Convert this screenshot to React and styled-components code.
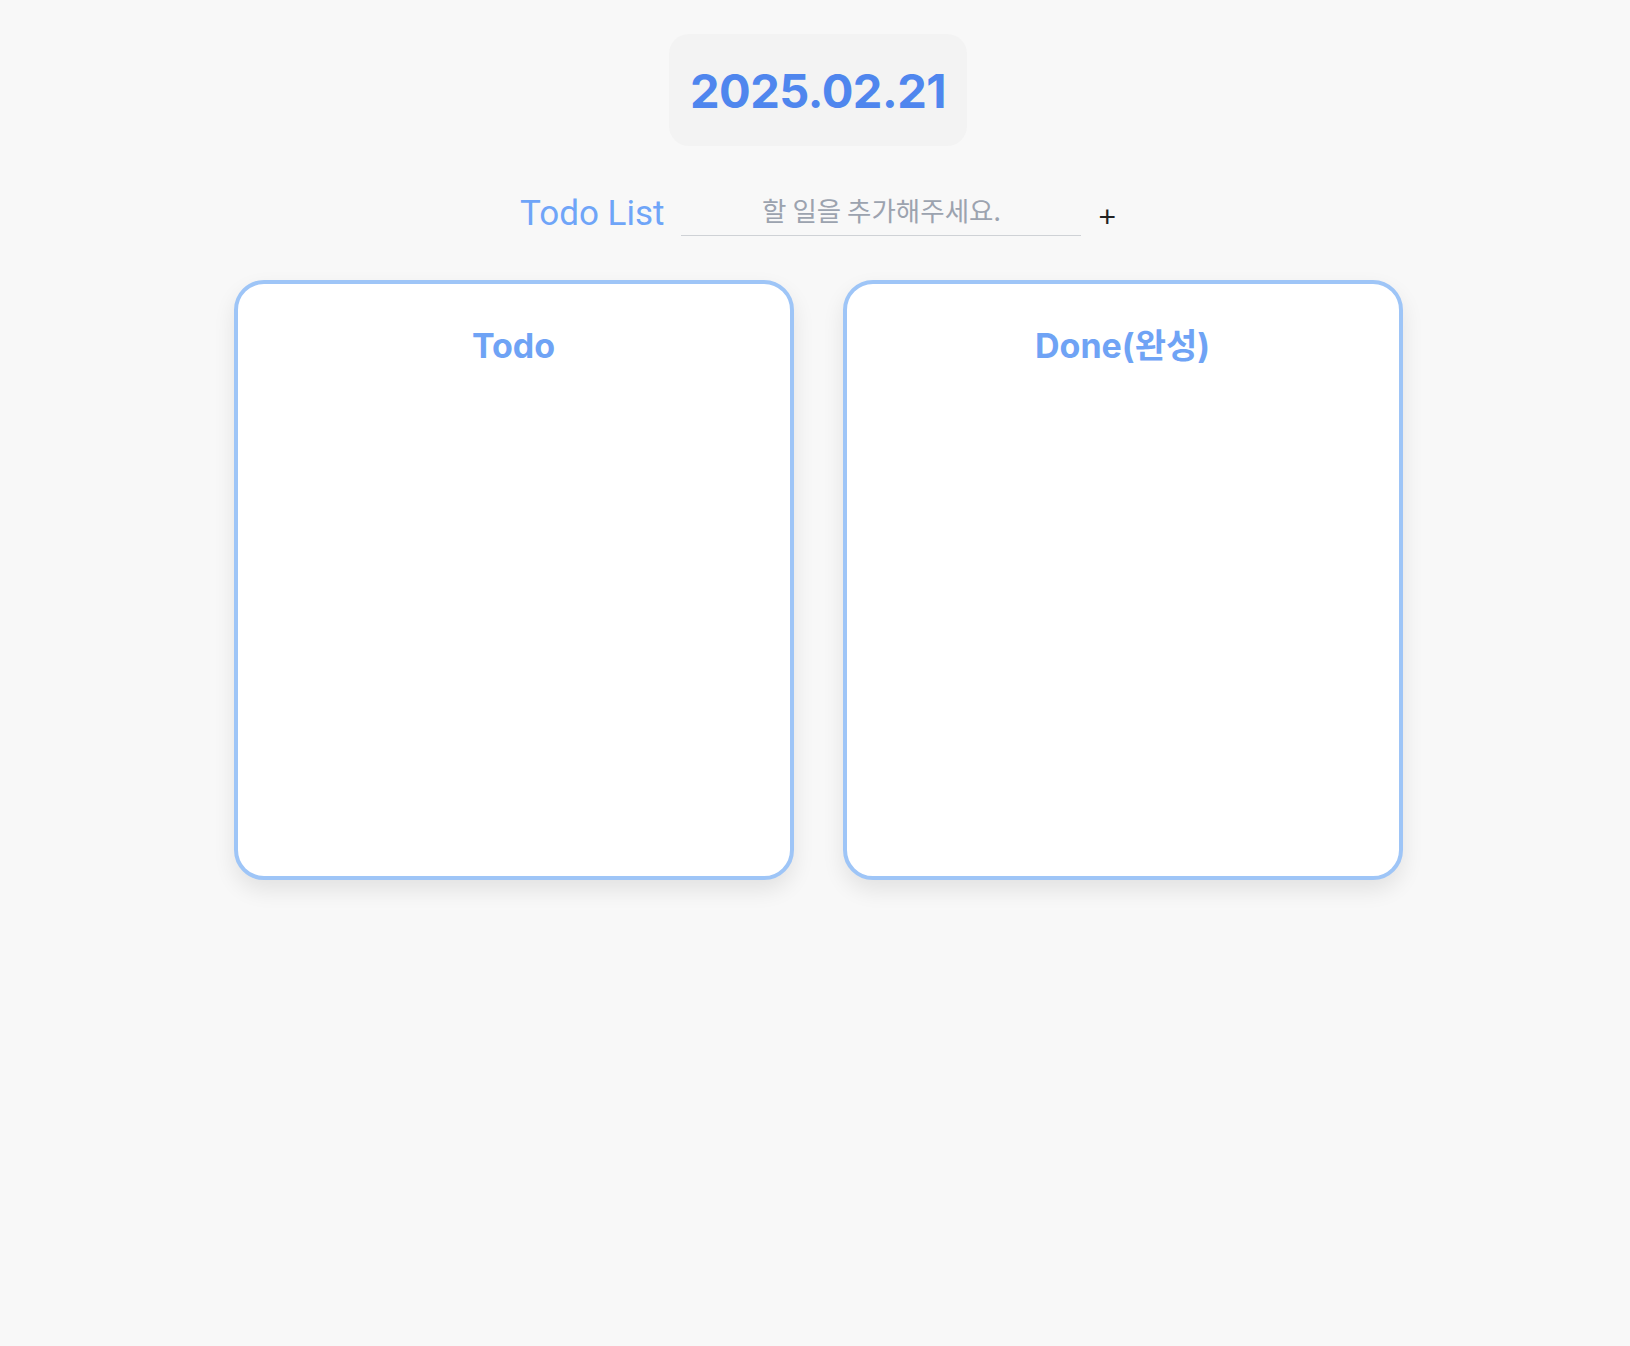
import React, { useState } from 'react';
import styled, { createGlobalStyle } from 'styled-components';

const GlobalStyle = createGlobalStyle`
  * { box-sizing: border-box; }
  body {
    margin: 0;
    background: #f8f8f8;
    font-family: Inter, "Noto Sans CJK KR", sans-serif;
  }
`;

const Page = styled.main`
  min-height: 100vh;
  display: flex;
  flex-direction: column;
  align-items: center;
  padding: 34px 0 60px 6px;
`;

const DateBox = styled.h1`
  margin: 0;
  height: 112px;
  padding: 0 21px;
  display: flex;
  align-items: center;
  border-radius: 20px;
  background: #f3f3f3;
  color: #4f86ee;
  font-size: 47px;
  font-weight: 700;
  letter-spacing: -0.5px;
`;

const AddRow = styled.form`
  margin-top: 46px;
  display: flex;
  align-items: flex-end;
  gap: 17px;
`;

const Label = styled.span`
  font-family: Roboto, "Noto Sans CJK KR", sans-serif;
  font-size: 35px;
  color: #6fa5f8;
  line-height: 1;
  padding-bottom: 5px;
`;

const Input = styled.input`
  width: 400px;
  height: 44px;
  border: none;
  border-bottom: 1.5px solid #cfd2d6;
  background: transparent;
  outline: none;
  text-align: center;
  font-family: "Noto Sans CJK KR", sans-serif;
  font-size: 26.5px;
  color: #333;
  padding: 0 0 8px;
  &::placeholder { color: #9ca3af; }
`;

const AddButton = styled.button`
  border: none;
  background: none;
  padding: 0 0 4px;
  font-size: 30px;
  line-height: 1;
  color: #222;
  cursor: pointer;
`;

const Board = styled.section`
  margin-top: 44px;
  display: flex;
  gap: 49px;
`;

const Column = styled.div`
  width: 560px;
  height: 600px;
  background: #fff;
  border: 4px solid #9ec5f7;
  border-radius: 30px;
  box-shadow: 0 10px 22px rgba(0, 0, 0, 0.09);
  padding: 42px 24px;
`;

const ColumnTitle = styled.h2`
  margin: 0;
  height: 40px;
  line-height: 40px;
  text-align: center;
  font-size: 34px;
  font-weight: 700;
  color: #6fa3f5;
`;

export default function App() {
  const [text, setText] = useState('');
  return (
    <>
      <GlobalStyle />
      <Page>
        <DateBox>2025.02.21</DateBox>
        <AddRow onSubmit={(e) => e.preventDefault()}>
          <Label>Todo List</Label>
          <Input
            value={text}
            onChange={(e) => setText(e.target.value)}
            placeholder="할 일을 추가해주세요."
          />
          <AddButton type="submit">+</AddButton>
        </AddRow>
        <Board>
          <Column>
            <ColumnTitle>Todo</ColumnTitle>
          </Column>
          <Column>
            <ColumnTitle>Done(완성)</ColumnTitle>
          </Column>
        </Board>
      </Page>
    </>
  );
}
